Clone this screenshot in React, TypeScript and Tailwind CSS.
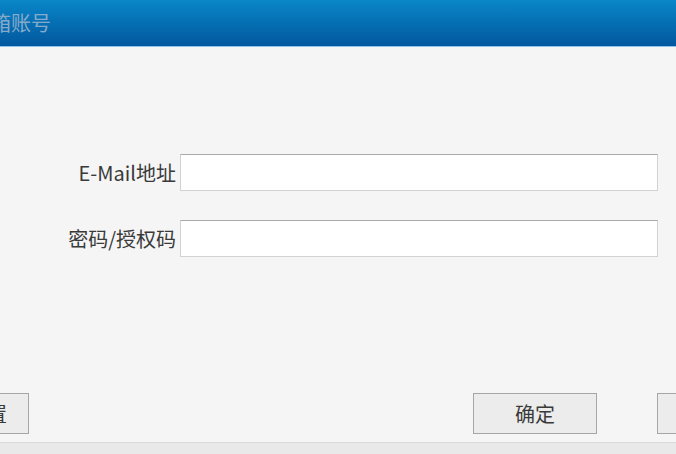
import React from "react";

const font = { fontFamily: '"Noto Sans CJK SC", "Noto Sans", sans-serif' };

const Field = ({ label }: { label: string }) => (
  <div className="flex items-center">
    <label className="w-[176px] text-right text-[20px] leading-none text-[#3a3a3a]">{label}</label>
    <input
      type="text"
      className="ml-[4px] h-[37px] w-[478px] border border-[#d2d2d2] border-t-[#a9a9a9] bg-white px-2 text-[16px] outline-none"
    />
  </div>
);

const Btn = ({ text, className }: { text: string; className?: string }) => (
  <button
    className={
      "h-[41px] w-[124px] shrink-0 border border-[#a6a6a6] bg-[#ececec] text-[20px] leading-none text-[#3a3a3a] " +
      (className ?? "")
    }
  >
    {text}
  </button>
);

export default function App() {
  return (
    <div className="flex h-[454px] w-[676px] flex-col overflow-hidden bg-[#f5f5f5]" style={font}>
      <div className="flex h-[46px] shrink-0 items-center bg-gradient-to-b from-[#0a87c8] to-[#04579e]">
        <span className="ml-[-29px] whitespace-nowrap text-[20px] leading-none text-[#86aacb]">邮箱账号</span>
      </div>
      <div className="h-px shrink-0 bg-[#8cc3ea]" />
      <div className="flex flex-1 flex-col pt-[107px]">
        <div className="flex flex-col gap-[29px]">
          <Field label="E-Mail地址" />
          <Field label="密码/授权码" />
        </div>
        <div className="flex-1" />
        <div className="mb-[8px] flex">
          <Btn text="高级设置" className="ml-[-95px]" />
          <Btn text="确定" className="ml-[444px]" />
          <Btn text="取消" className="ml-[60px]" />
        </div>
      </div>
      <div className="h-[12px] shrink-0 border-t border-[#dadada] bg-[#e9e9e9]" />
    </div>
  );
}
